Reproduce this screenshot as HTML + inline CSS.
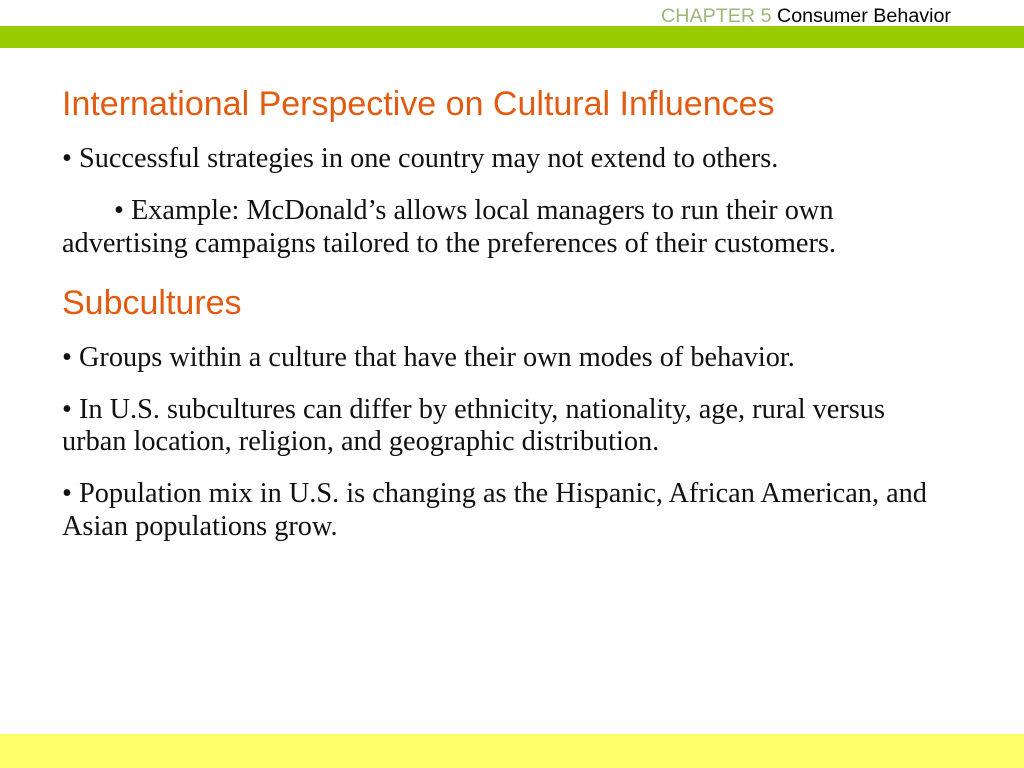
<!DOCTYPE html>
<html><head><style>
body{margin:0;width:1024px;height:768px;position:relative;background:#fff;overflow:hidden}
.t{position:absolute;white-space:nowrap}
.h{font-family:"Liberation Sans",sans-serif;font-size:34px;color:#E35B10}
.b{font-family:"Liberation Serif",serif;font-size:28.3px;color:#111}
</style></head><body>
<div class="t" style="right:73px;top:5px;font-family:'Liberation Sans',sans-serif;font-size:19.7px;color:#000"><span style="color:#9CB87A">CHAPTER 5</span> Consumer Behavior</div>
<div style="position:absolute;left:0;top:26px;width:1024px;height:22px;background:#99CC00"></div>
<div class="t h" style="left:62px;top:85px">International Perspective on Cultural Influences</div>
<div class="t b" style="left:62px;top:143px">• Successful strategies in one country may not extend to others.</div>
<div class="t b" style="left:114px;top:195px">• Example: McDonald’s allows local managers to run their own</div>
<div class="t b" style="left:62px;top:228px">advertising campaigns tailored to the preferences of their customers.</div>
<div class="t h" style="left:62px;top:284px">Subcultures</div>
<div class="t b" style="left:62px;top:342px">• Groups within a culture that have their own modes of behavior.</div>
<div class="t b" style="left:62px;top:394px">• In U.S. subcultures can differ by ethnicity, nationality, age, rural versus</div>
<div class="t b" style="left:62px;top:426px">urban location, religion, and geographic distribution.</div>
<div class="t b" style="left:62px;top:478px">• Population mix in U.S. is changing as the Hispanic, African American, and</div>
<div class="t b" style="left:62px;top:511px">Asian populations grow.</div>
<div style="position:absolute;left:0;top:734px;width:1024px;height:34px;background:#FFFF66"></div>
</body></html>
